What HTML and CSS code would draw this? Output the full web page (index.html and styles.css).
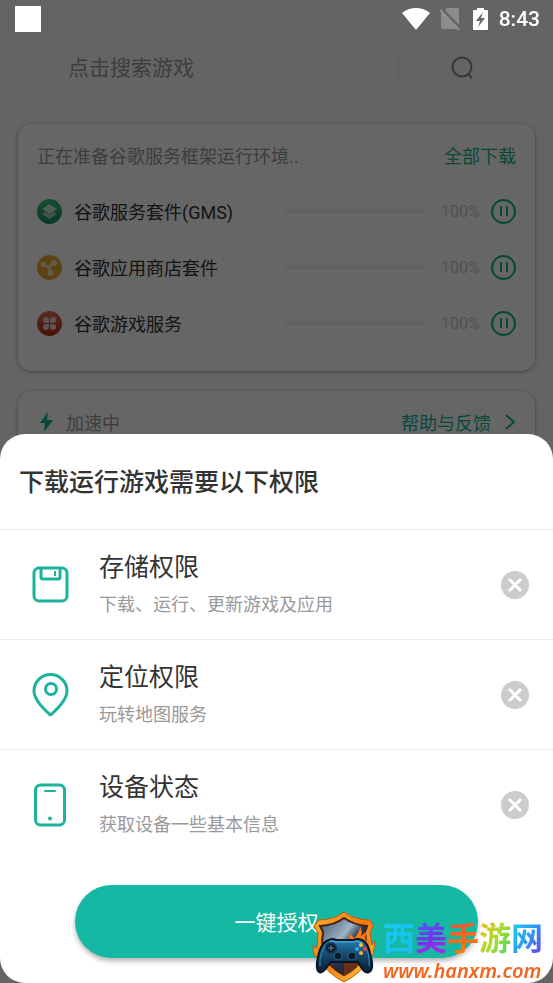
FILE: index.html
```html
<!DOCTYPE html>
<html lang="zh-CN">
<head>
  <meta charset="UTF-8">
  <meta name="viewport" content="width=device-width, initial-scale=1">
  <title>下载运行游戏需要以下权限</title>
  <link rel="stylesheet" href="styles.css">
</head>
<body>
  <header class="status-bar">
    <span class="status-app"></span>
    <svg class="status-wifi" width="28" height="22" viewBox="0 0 28 22"><path d="M0 5Q6 0 14 0T28 5L14 22Z" fill="#fff"/></svg>
    <svg class="status-sim" width="22" height="24" viewBox="0 0 22 24">
      <path d="M8 1h10q2 0 2 2v18q0 1-1 1H4q-2 0-2-2V7Z" fill="#8c8c8c"/>
      <path d="M2 1l19 20" stroke="#666" stroke-width="3"/>
      <path d="M1 3l19 20" stroke="#929292" stroke-width="2"/>
    </svg>
    <svg class="status-battery" width="15" height="24" viewBox="0 0 15 24">
      <path d="M4 1h7v2h3q1 0 1 1v18q0 1-1 1H1q-1 0-1-1V4q0-1 1-1h3Z" fill="#fff"/>
      <path d="M10 5l-7 9h4l-2 6 7-9H8Z" fill="#666"/>
    </svg>
    <time class="status-time">8:43</time>
  </header>

  <main class="page">
    <form class="search">
      <input class="search-input" type="search" placeholder="点击搜索游戏" aria-label="点击搜索游戏">
      <button class="search-btn" type="button" aria-label="搜索">
        <svg width="24" height="24" viewBox="0 0 24 24" fill="none" stroke="#888" stroke-width="2"><circle cx="11" cy="11" r="9.5"/><path d="M17 18l4 4" stroke-width="2"/></svg>
      </button>
    </form>

    <section class="card">
      <div class="card-head">
        <span class="card-note">正在准备谷歌服务框架运行环境..</span>
        <a class="card-link all" href="#">全部下载</a>
      </div>
      <ul class="tasks">
        <li class="task">
          <svg width="25" height="25" viewBox="0 0 25 25">
            <defs><linearGradient id="green" x2="0" y2="1"><stop stop-color="#38c77c"/><stop offset="1" stop-color="#108a60"/></linearGradient></defs>
            <circle cx="12.5" cy="12.5" r="12.5" fill="url(#green)"/>
            <path d="M5 15l3-2 4.500 2.500L17 13l3 2-7.500 5Z" fill="#a5cdb9"/><path d="M5 10l7.500-5L20 10l-7.500 5Z" fill="#cfe3d8"/>
          </svg>
          <span class="task-name">谷歌服务套件(GMS)</span>
          <span class="task-bar"></span>
          <span class="task-percent">100%</span>
          <button class="pause" type="button" aria-label="暂停"></button>
        </li>
        <li class="task">
          <svg width="25" height="25" viewBox="0 0 25 25">
            <circle cx="12.500" cy="12.500" r="12.500" fill="#e8a932"/>
            <path d="M7 10l5 2 4-4M12 12l2 6" stroke="#f6e6c0" stroke-width="2" fill="none"/>
            <circle cx="6.500" cy="9.500" r="2.500" fill="#f6e6c0"/><circle cx="17" cy="8" r="3" fill="#f6e6c0"/><circle cx="13.500" cy="18" r="3" fill="#f6e6c0"/><circle cx="12" cy="12" r="2" fill="#f6e6c0"/>
          </svg>
          <span class="task-name">谷歌应用商店套件</span>
          <span class="task-bar"></span>
          <span class="task-percent">100%</span>
          <button class="pause" type="button" aria-label="暂停"></button>
        </li>
        <li class="task">
          <svg width="25" height="25" viewBox="0 0 25 25">
            <defs><linearGradient id="red" x2="0" y2="1"><stop stop-color="#e46a55"/><stop offset="1" stop-color="#b82a10"/></linearGradient></defs>
            <circle cx="12.500" cy="12.500" r="12.500" fill="url(#red)"/>
            <g fill="#ecd0cc"><path d="M12 12H9a3 3 0 1 1 3-3Z"/><path d="M13 12h3a3 3 0 1 0-3-3Z"/><path d="M12 13H9a3 3 0 1 0 3 3Z"/><path d="M13 13h3a3 3 0 1 1-3 3Z"/></g>
          </svg>
          <span class="task-name">谷歌游戏服务</span>
          <span class="task-bar"></span>
          <span class="task-percent">100%</span>
          <button class="pause" type="button" aria-label="暂停"></button>
        </li>
      </ul>
    </section>

    <section class="card">
      <div class="card-head">
        <span class="card-note boost">
          <svg width="18" height="20" viewBox="0 0 18 20"><path d="M11 0L3 11h5l-1 9 9-12h-6Z" fill="#12b494"/></svg>
          加速中
        </span>
        <a class="card-link" href="#">帮助与反馈
          <svg width="12" height="16" viewBox="0 0 12 16" fill="none" stroke="#12b494" stroke-width="2"><path d="M2 1l8 7-8 7"/></svg>
        </a>
      </div>
    </section>
  </main>

  <div class="mask"></div>

  <section class="sheet" role="dialog" aria-labelledby="sheet-title">
    <h1 class="sheet-title" id="sheet-title">下载运行游戏需要以下权限</h1>
    <ul class="perms">
      <li class="perm">
        <svg class="perm-icon" width="37" height="44" viewBox="0 0 37 44" fill="none" stroke="#1cb39c" stroke-width="3">
          <rect x="2" y="5" width="33" height="33" rx="5"/><path d="M9 5v9q0 2 2 2h15q2 0 2-2V5"/><path d="M23 8v5" stroke-width="2"/>
        </svg>
        <div class="perm-text">
          <h2>存储权限</h2>
          <p>下载、运行、更新游戏及应用</p>
        </div>
        <button class="close" type="button" aria-label="关闭"><svg width="28" height="28" viewBox="0 0 28 28"><path d="M8 8l12 12M20 8L8 20" stroke="#fff" stroke-width="3"/></svg></button>
      </li>
      <li class="perm">
        <svg class="perm-icon" width="37" height="44" viewBox="0 0 37 44" fill="none" stroke="#1cb39c" stroke-width="3">
          <path d="M18.500 42C14 38 2 28 2 18a16.500 16.500 0 0 1 33 0C35 28 23 38 18.500 42Z" stroke-linejoin="round"/><circle cx="19" cy="16" r="5.500"/>
        </svg>
        <div class="perm-text">
          <h2>定位权限</h2>
          <p>玩转地图服务</p>
        </div>
        <button class="close" type="button" aria-label="关闭"><svg width="28" height="28" viewBox="0 0 28 28"><path d="M8 8l12 12M20 8L8 20" stroke="#fff" stroke-width="3"/></svg></button>
      </li>
      <li class="perm">
        <svg class="perm-icon" width="37" height="44" viewBox="0 0 37 44" fill="none" stroke="#1cb39c" stroke-width="3">
          <rect x="3.500" y="2" width="29" height="40" rx="5"/><path d="M13 8h10" stroke-linecap="round" stroke-width="2"/><circle cx="18" cy="35.500" r="2" fill="#1cb39c" stroke="none"/>
        </svg>
        <div class="perm-text">
          <h2>设备状态</h2>
          <p>获取设备一些基本信息</p>
        </div>
        <button class="close" type="button" aria-label="关闭"><svg width="28" height="28" viewBox="0 0 28 28"><path d="M8 8l12 12M20 8L8 20" stroke="#fff" stroke-width="3"/></svg></button>
      </li>
    </ul>
    <button class="grant" type="button">一键授权</button>
  </section>

  <aside class="brand">
    <svg class="brand-logo" width="64" height="72" viewBox="0 0 64 72">
      <defs>
        <linearGradient id="gold" x2="1" y2="1"><stop stop-color="#ffb030"/><stop offset=".5" stop-color="#f07a10"/><stop offset="1" stop-color="#ffd34a"/></linearGradient>
        <linearGradient id="steel" x2="1" y2="1"><stop stop-color="#39516b"/><stop offset=".4" stop-color="#9fb4c6"/><stop offset=".55" stop-color="#26384d"/><stop offset="1" stop-color="#0e1826"/></linearGradient>
        <linearGradient id="pad" x2="0" y2="1"><stop stop-color="#2581b4"/><stop offset=".5" stop-color="#154669"/><stop offset="1" stop-color="#0a1c33"/></linearGradient>
      </defs>
      <path d="M32 1Q43 9 58 9l3 6-3 7 2 12 3-4-2 14-5 4Q50 62 32 71 14 62 8 48L2 44l-1-9 4 2 1-15-4-7 5-6Q22 9 32 1Z" fill="url(#gold)" stroke="#c9580c"/>
      <path d="M32 7q10 7 23 8l-2 6q5 30-21 43Q6 51 11 21l-3-6Q23 14 32 7Z" fill="url(#steel)" stroke="#472010" stroke-width="2"/>
      <path d="M32 65V52l18-3q-5 10-18 16Z" fill="#6a3016"/>
      <path d="M29 35q3-6 8-6l1-6 4 4q5-4 6-11 3 5 1 9l6-5q-3 7-1 10l5-1-4 12H29Z" fill="#ff7610"/>
      <path d="M35 34q5-1 7-5l3 3 5-5-1 8Z" fill="#ffd043"/>
      <path d="M17 29q3-2 7 0h17q5-2 9 0 6 2 9 17 3 13-2 15-4 2-8-5l-3-5H19l-4 5q-5 7-8 5-4-3-1-15 3-15 11-17Z" fill="url(#pad)" stroke="#061525" stroke-width="2"/>
      <path d="M17 31q3-2 7 0h17q5-2 9 1" fill="none" stroke="#49b5dc"/>
      <path d="M8 55q-1-14 7-22M57 55q1-12-4-20" fill="none" stroke="#2992bd"/>
      <circle cx="19" cy="37" r="6" fill="#153550"/>
      <path d="M19 33v8M15 37h8" stroke="#071421" stroke-width="4"/><path d="M19 34v6M16 37h6" stroke="#6d8ba0"/>
      <circle cx="26" cy="45" r="4" fill="#0a1829" stroke="#276185"/><circle cx="40" cy="45" r="4" fill="#0a1829" stroke="#276185"/>
      <circle cx="49" cy="34" r="2" fill="#ffc42d"/><circle cx="45" cy="38" r="2" fill="#2baced"/><circle cx="53" cy="38" r="2" fill="#ff423b"/><circle cx="49" cy="42" r="2" fill="#ffb51f"/>
    </svg>
    <div class="brand-text">
      <div class="brand-name"><span class="c1">西</span><span class="c2">美</span><span class="c3">手</span><span class="c4">游</span><span class="c5">网</span></div>
      <div class="brand-url">www.hanxm.com</div>
    </div>
  </aside>
</body>
</html>
```
FILE: styles.css
```css
* {
  box-sizing: border-box;
}

body {
  margin: 0;
  height: 100vh;
  overflow: hidden;
  font-family: Roboto, "Noto Sans CJK SC", sans-serif;
  background: #fafafa;
  color: #333;
}

h1, h2, p, ul {
  margin: 0;
  padding: 0;
}

ul {
  list-style: none;
}

button, input {
  font: inherit;
  border: none;
  padding: 0;
  background: none;
}

svg {
  display: block;
  flex: none;
}

/* status bar stays above the mask */
.status-bar {
  position: relative;
  z-index: 2;
  display: flex;
  align-items: center;
  height: 38px;
  padding: 0 13px 0 15px;
}

.status-app {
  width: 26px;
  height: 26px;
  margin-right: auto;
  background: #fff;
}

.status-sim {
  margin-left: 9px;
}

.status-battery {
  margin: 0 11px 0 12px;
}

.status-time {
  color: #fff;
  font-size: 21px;
  font-weight: 500;
}

.search {
  display: flex;
  align-items: center;
  height: 60px;
  padding-left: 68px;
}

.search-input {
  flex: 1;
  min-width: 0;
  font-size: 21px;
  outline: none;
}

.search-input::placeholder {
  color: #999;
}

.search-btn {
  display: flex;
  align-items: center;
  width: 155px;
  height: 24px;
  padding-left: 52px;
  border-left: 1px solid #e0e0e0;
}

.card {
  margin: 26px 18px 0;
  padding: 6px 19px 20px;
  border-radius: 14px;
  background: #fff;
  box-shadow: 0 1px 4px rgba(0, 0, 0, 0.35);
}

.card + .card {
  margin-top: 20px;
}

.card-head {
  display: flex;
  align-items: center;
  justify-content: space-between;
  height: 50px;
  margin-bottom: 3px;
  font-size: 18px;
}

.card-note {
  color: #999;
}

.card-link {
  display: flex;
  align-items: center;
  gap: 13px;
  color: #12b494;
  text-decoration: none;
}

.all {
  color: #18b47c;
}

.boost {
  display: flex;
  align-items: center;
  gap: 11px;
}

.task {
  display: flex;
  align-items: center;
  gap: 12px;
  height: 56px;
}

.task-name {
  flex: 1;
  font-size: 18px;
}

.task-bar {
  width: 140px;
  height: 4px;
  margin-right: 5px;
  border-radius: 2px;
  background: #f6f6f6;
}

.task-percent {
  width: 38px;
  font-size: 16px;
  color: #ccc;
}

.pause {
  display: flex;
  align-items: center;
  justify-content: center;
  gap: 4px;
  width: 25px;
  height: 25px;
  border: 2px solid #18b48a;
  border-radius: 50%;
}

.pause::before,
.pause::after {
  content: "";
  width: 2px;
  height: 10px;
  background: #18b48a;
}

.mask {
  position: fixed;
  inset: 0;
  z-index: 1;
  background: rgba(0, 0, 0, 0.6);
}

.sheet {
  position: fixed;
  left: 0;
  right: 0;
  bottom: 0;
  z-index: 3;
  padding-bottom: 25px;
  border-radius: 25px;
  background: #fff;
}

.sheet-title {
  padding: 3px 19px 0;
  font-size: 25px;
  font-weight: 500;
  line-height: 92px;
}

.perm {
  display: flex;
  align-items: center;
  gap: 30px;
  padding: 18px 24px 17px 32px;
  border-top: 1px solid #ebebeb;
}

.perm-text {
  flex: 1;
}

.perm h2 {
  font-size: 25px;
  font-weight: 400;
  line-height: 40px;
}

.perm p {
  font-size: 18px;
  line-height: 34px;
  color: #999;
}

.close {
  border-radius: 50%;
  background: #ccc;
}

.grant {
  display: block;
  width: calc(100% - 150px);
  height: 73px;
  margin: 26px auto 0;
  padding-bottom: 2px;
  border-radius: 37px;
  background: #14b8a3;
  box-shadow: 0 3px 5px rgba(0, 0, 0, 0.3);
  color: #fff;
  font-size: 21px;
}

.brand {
  position: fixed;
  right: 10px;
  bottom: 0;
  z-index: 4;
  display: flex;
  gap: 7px;
}

.brand-text {
  padding-top: 8px;
}

.brand-name {
  display: flex;
  font-size: 32px;
  font-weight: 700;
  line-height: 40px;
}

.brand-name span {
  color: transparent;
  background-clip: text;
  -webkit-background-clip: text;
}

.c1 { background-image: linear-gradient(135deg, #1fc8f5, #12c4f0 60%, #2cb8ff); }
.c2 { background-image: linear-gradient(160deg, #3a6cf5, #7a2cf0 50%, #c02ae0); }
.c3 { background-image: linear-gradient(160deg, #f0483c, #ff6a14 50%, #ff8a10); }
.c4 { background-image: linear-gradient(120deg, #ffb020, #a8dc30 50%, #30d870); }
.c5 { background-image: linear-gradient(120deg, #18d8e8, #2a9cf8 50%, #7a2cf0); }

.brand-url {
  font-family: "Noto Sans", "Open Sans", sans-serif;
  font-size: 20px;
  font-style: italic;
  font-weight: 600;
  line-height: 24px;
  color: #f4661e;
  text-shadow: 0 0 1px #fff;
}
```
